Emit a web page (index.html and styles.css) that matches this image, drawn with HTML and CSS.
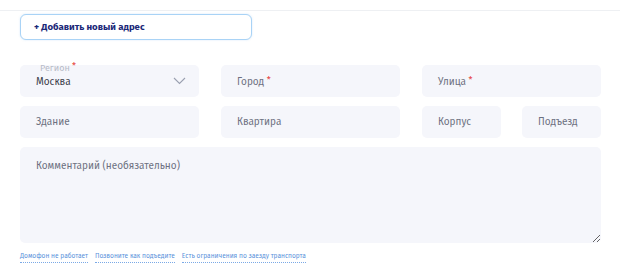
FILE: index.html
```
<!DOCTYPE html>
<html>
  <head>
    <meta charset="utf-8" />
    <link rel="stylesheet" href="styles.css">
    <title>Новый адрес</title>
  </head>
  <body>
    <div class="topbar"></div>
    <div class="form">
      <button type="button" class="addButton">+ Добавить новый адрес</button>

      <div class="row row-main">
        <div class="field field-select">
          <span class="floatLabel">Регион <span class="req">*</span></span>
          <span class="value">Москва</span>
          <svg class="chevron" width="13" height="8" viewBox="0 0 13 8">
            <path d="M1 1 L6.5 6.5 L12 1" fill="none" stroke="#9aa0b0" stroke-width="1.1" />
          </svg>
        </div>
        <div class="field"><span class="placeholder">Город <span class="req">*</span></span></div>
        <div class="field"><span class="placeholder">Улица <span class="req">*</span></span></div>
      </div>

      <div class="row row-main">
        <div class="field"><span class="placeholder">Здание</span></div>
        <div class="field"><span class="placeholder">Квартира</span></div>
        <div class="row-split">
          <div class="field"><span class="placeholder">Корпус</span></div>
          <div class="field"><span class="placeholder">Подъезд</span></div>
        </div>
      </div>

      <textarea class="comment" placeholder="Комментарий (необязательно)"></textarea>

      <div class="hints">
        <a class="hint">Домофон не работает</a>
        <a class="hint">Позвоните как подъедите</a>
        <a class="hint">Есть ограничения по заезду транспорта</a>
      </div>
    </div>
  </body>
</html>
```

FILE: styles.css
```
body {
  margin: 0;
  background: #ffffff;
  font-family: "Fira Sans", "Noto Sans", sans-serif;
}

.topbar {
  height: 10px;
  border-bottom: 1px solid #eef0f3;
}

.form {
  padding: 3px 19px 0 20px;
}

.addButton {
  display: block;
  width: 232px;
  height: 26px;
  padding: 0 0 0 13px;
  text-align: left;
  background: #ffffff;
  border: 1px solid #a9d3f6;
  border-radius: 6px;
  box-shadow: 0 0 2px rgba(120, 180, 240, 0.35);
  color: #1a2878;
  font-family: "Fira Sans", "Noto Sans", sans-serif;
  font-weight: bold;
  font-size: 9.6px;
}

.row {
  display: grid;
  gap: 22px;
  margin-bottom: 9px;
}

.row-main {
  grid-template-columns: 1fr 1fr 1fr;
}

.row-main:first-of-type {
  margin-top: 25px;
}

.row-split {
  display: grid;
  grid-template-columns: 1fr 1fr;
  gap: 21px;
}

.field {
  position: relative;
  display: flex;
  align-items: center;
  height: 32px;
  padding: 0 16px;
  background: #f5f6fb;
  border-radius: 5px;
  font-size: 10px;
  color: #6d7181;
}

.field-select .value {
  flex: 1;
  padding-top: 2px;
  color: #3a3d4a;
}

.chevron {
  flex: none;
  margin-right: -3px;
}

.floatLabel {
  position: absolute;
  left: 20px;
  top: -4px;
  font-size: 9px;
  color: #b7bbc7;
}

.req {
  color: #e53935;
  font-size: 9px;
  vertical-align: 2px;
}

.comment {
  display: block;
  box-sizing: border-box;
  width: 100%;
  height: 96px;
  padding: 13px 16px;
  margin: 0;
  border: none;
  border-radius: 5px;
  background: #f5f6fb;
  font-family: "Fira Sans", "Noto Sans", sans-serif;
  font-size: 10px;
  color: #2b2e3a;
  resize: vertical;
  outline: none;
}

.comment::placeholder {
  color: #6d7181;
}

.hints {
  display: flex;
  gap: 7px;
  margin-top: 8px;
}

.hint {
  font-size: 6.6px;
  color: #5a92db;
  border-bottom: 1px dotted #7aa9e6;
  line-height: 11px;
  cursor: pointer;
}
```
